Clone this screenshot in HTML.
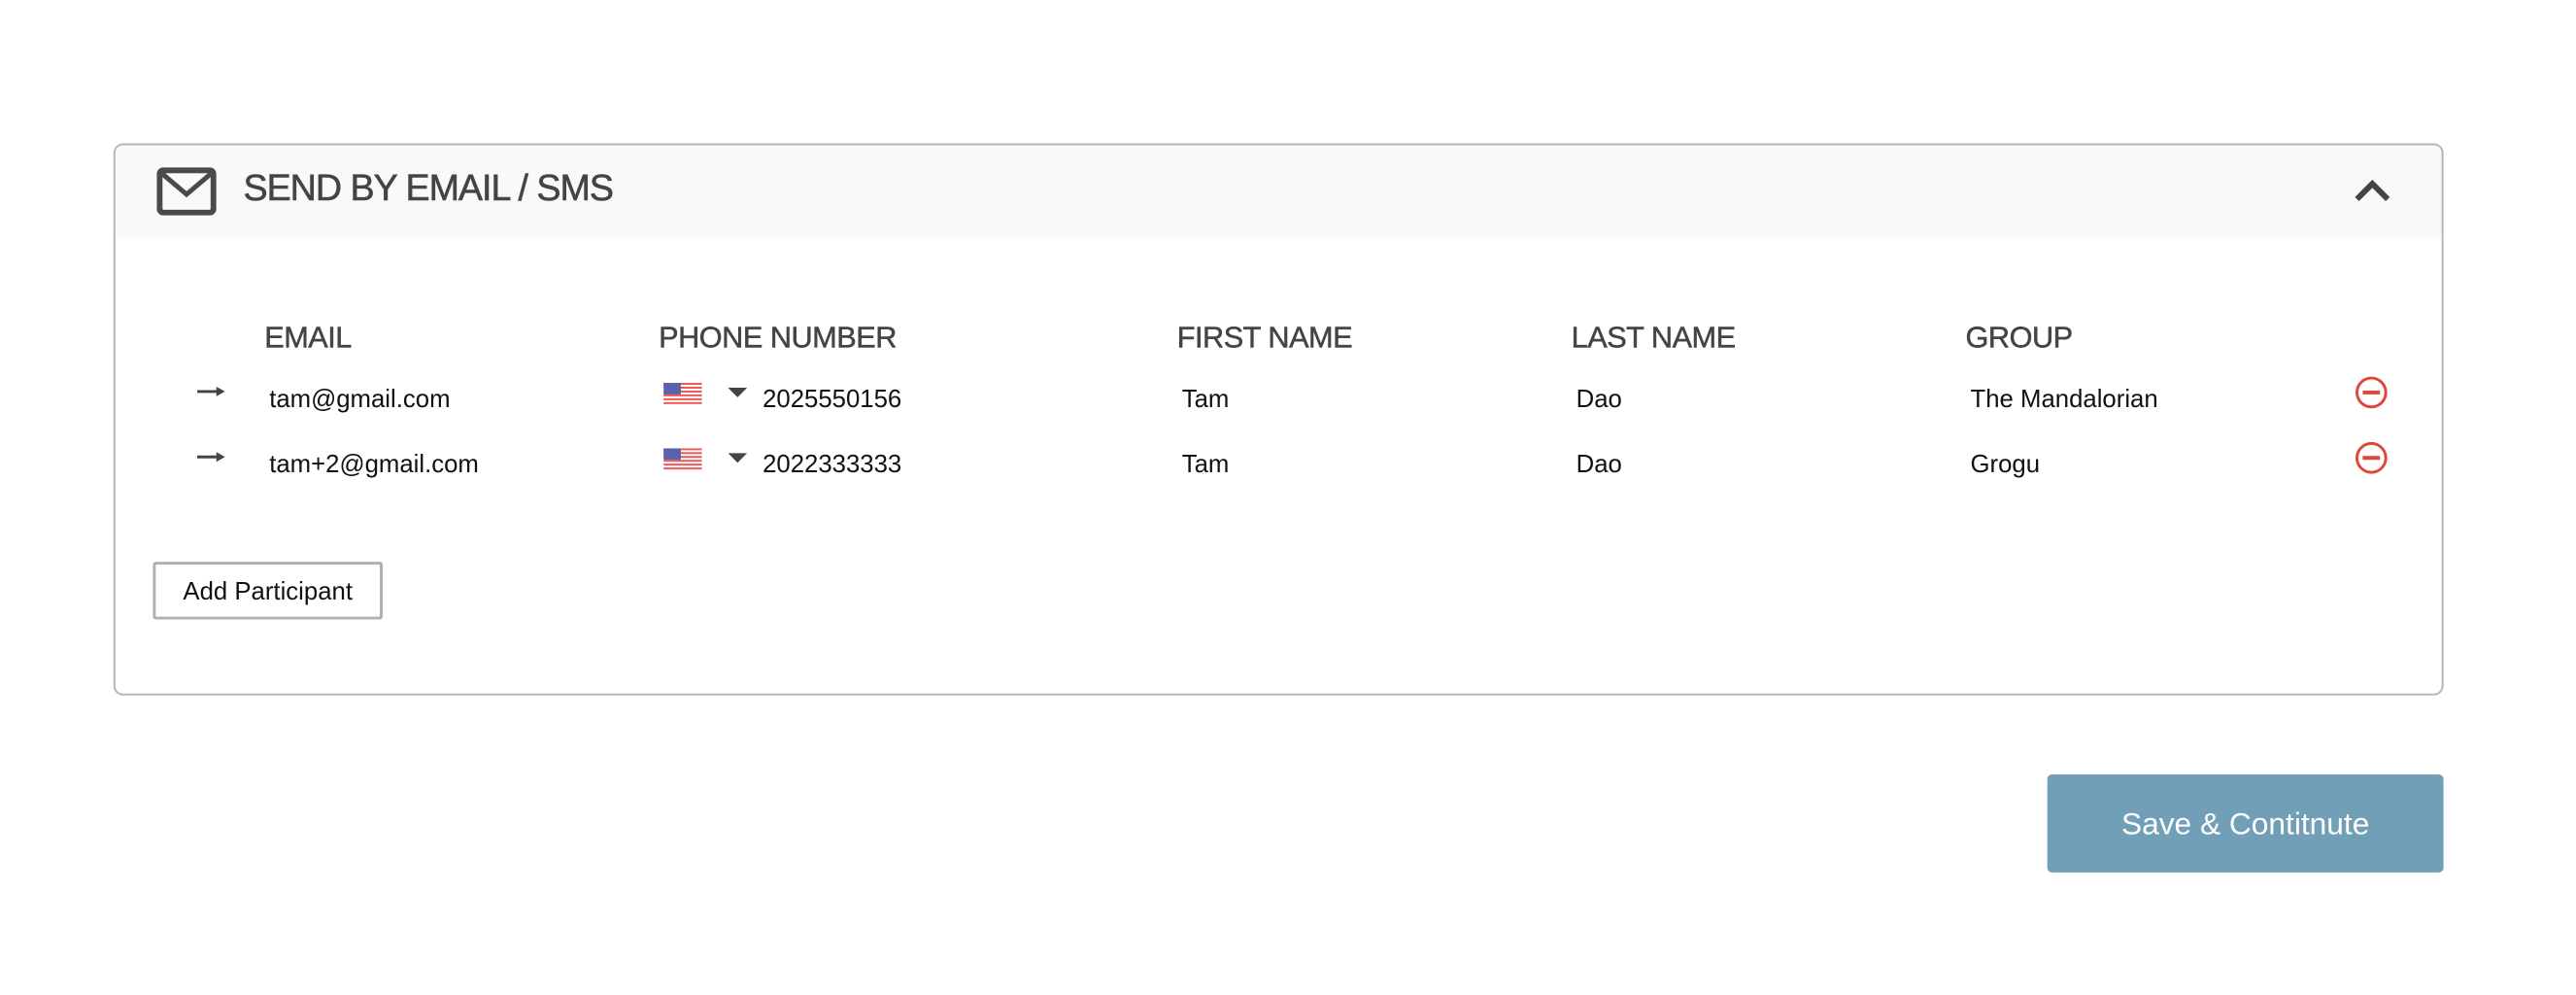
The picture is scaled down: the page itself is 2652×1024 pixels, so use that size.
<!DOCTYPE html>
<html><head><meta charset="utf-8"><style>
*{margin:0;padding:0;box-sizing:border-box}
body{width:2652px;height:1024px;background:#fff;font-family:"Liberation Sans",Arial,sans-serif;overflow:hidden}
#w{position:absolute;left:0;top:0;width:2652px;height:1024px;transform:scale(0.99);transform-origin:0 0}
.card{position:absolute;left:118px;top:149px;width:2423px;height:574px;border:2px solid #b5b5b5;border-radius:10px;overflow:hidden}
.hdr{position:absolute;left:0;top:0;right:0;height:96px;background:#f9f9f9}
.t{position:absolute;white-space:nowrap}
.title{left:133px;top:24px;font-size:38px;color:#444;letter-spacing:-1px;-webkit-text-stroke:0.6px #444}
.h{font-size:31px;color:#444;letter-spacing:-0.5px;-webkit-text-stroke:0.5px #444}
.d{font-size:26px;color:#111}
.btn{position:absolute;left:159px;top:584px;width:239px;height:60px;border:3px solid #b0b0b0;border-radius:3px;font-size:26px;display:flex;align-items:center;justify-content:center;color:#111}
.save{position:absolute;left:2129px;top:805px;width:412px;height:102px;background:#719fb8;border-radius:5px;color:#fff;font-size:32px;display:flex;align-items:center;justify-content:center}
</style></head><body><div id="w">
<div class="card">
<div class="hdr">
<svg class="t" style="left:43px;top:23px" width="62" height="50" viewBox="0 0 62 50"><rect x="3" y="3" width="56" height="44" rx="4" fill="none" stroke="#4a4a4a" stroke-width="6"/><path d="M5 6 L31 28 L57 6" fill="none" stroke="#4a4a4a" stroke-width="5"/></svg>
<div class="t title">SEND BY EMAIL / SMS</div>
<svg class="t" style="left:2328px;top:34px" width="38" height="26" viewBox="0 0 38 26"><path d="M3 22 L19 6 L35 22" fill="none" stroke="#444" stroke-width="6"/></svg>
</div>
</div>
<div class="t h" style="left:275px;top:333px">EMAIL</div>
<div class="t h" style="left:685px;top:333px">PHONE NUMBER</div>
<div class="t h" style="left:1224px;top:333px">FIRST NAME</div>
<div class="t h" style="left:1634px;top:333px">LAST NAME</div>
<div class="t h" style="left:2044px;top:333px">GROUP</div>

<svg class="t" style="left:205px;top:401px" width="30" height="12" viewBox="0 0 30 12"><path d="M0 6 H24" stroke="#444" stroke-width="3"/><path d="M20 1 L29 6 L20 11Z" fill="#444"/></svg>
<div class="t d" style="left:280px;top:399px">tam@gmail.com</div>
<div class="t d" style="left:793px;top:399px">2025550156</div>
<div class="t d" style="left:1229px;top:399px">Tam</div>
<div class="t d" style="left:1639px;top:399px">Dao</div>
<div class="t d" style="left:2049px;top:399px">The Mandalorian</div>

<svg class="t" style="left:205px;top:469px" width="30" height="12" viewBox="0 0 30 12"><path d="M0 6 H24" stroke="#444" stroke-width="3"/><path d="M20 1 L29 6 L20 11Z" fill="#444"/></svg>
<div class="t d" style="left:280px;top:467px">tam+2@gmail.com</div>
<div class="t d" style="left:793px;top:467px">2022333333</div>
<div class="t d" style="left:1229px;top:467px">Tam</div>
<div class="t d" style="left:1639px;top:467px">Dao</div>
<div class="t d" style="left:2049px;top:467px">Grogu</div>

<svg class="t" style="left:690px;top:398px" width="40" height="24" viewBox="0 0 40 24"><rect width="40" height="24" fill="#fff"/><g fill="#e55"><rect y="0" width="40" height="2"/><rect y="4" width="40" height="2"/><rect y="8" width="40" height="2"/><rect y="12" width="40" height="2"/><rect y="16" width="40" height="2"/><rect y="20" width="40" height="2"/></g><rect width="18" height="12" fill="#5a62a8"/></svg>
<svg class="t" style="left:690px;top:466px" width="40" height="24" viewBox="0 0 40 24"><rect width="40" height="24" fill="#fff"/><g fill="#e55"><rect y="0" width="40" height="2"/><rect y="4" width="40" height="2"/><rect y="8" width="40" height="2"/><rect y="12" width="40" height="2"/><rect y="16" width="40" height="2"/><rect y="20" width="40" height="2"/></g><rect width="18" height="12" fill="#5a62a8"/></svg>
<svg class="t" style="left:757px;top:403px" width="20" height="10"><path d="M0 0 H20 L10 10Z" fill="#444"/></svg>
<svg class="t" style="left:757px;top:471px" width="20" height="10"><path d="M0 0 H20 L10 10Z" fill="#444"/></svg>

<svg class="t" style="left:2448px;top:390px" width="36" height="36" viewBox="0 0 36 36"><circle cx="18" cy="18" r="15" fill="none" stroke="#e0473a" stroke-width="3"/><rect x="9" y="16" width="18" height="4" fill="#e0473a"/></svg>
<svg class="t" style="left:2448px;top:458px" width="36" height="36" viewBox="0 0 36 36"><circle cx="18" cy="18" r="15" fill="none" stroke="#e0473a" stroke-width="3"/><rect x="9" y="16" width="18" height="4" fill="#e0473a"/></svg>

<div class="btn">Add Participant</div>
<div class="save">Save &amp; Contitnute</div>
</div></body></html>
